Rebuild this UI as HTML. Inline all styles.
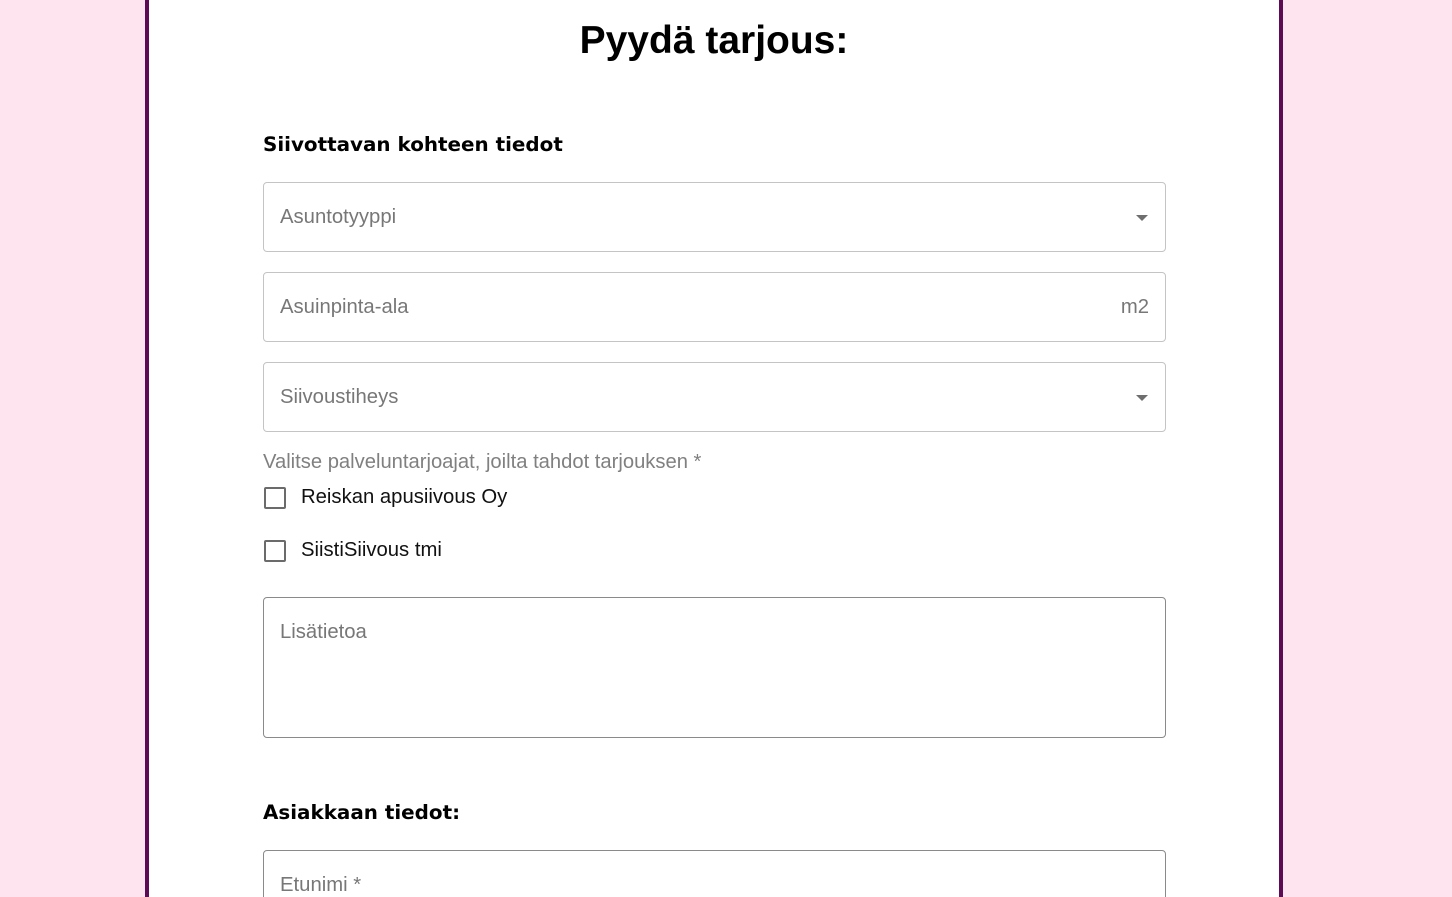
<!DOCTYPE html>
<html><head><meta charset="utf-8"><style>
html,body{margin:0;padding:0;width:1452px;height:897px;overflow:hidden;background:#fde4ef;font-family:"Liberation Sans",Arial,sans-serif;position:relative;}
.card{position:absolute;left:145px;top:0;width:1130px;height:897px;overflow:hidden;background:#fff;border-left:4px solid #5e0b56;border-right:4px solid #5e0b56;}
h1{position:absolute;left:0;width:1130px;top:19px;margin:0;text-align:center;font-size:39px;font-weight:bold;color:#000;}
h2{position:absolute;left:114px;margin:0;font-family:"DejaVu Sans",sans-serif;font-size:19.9px;font-weight:bold;color:#000;}
.f{position:absolute;left:114px;width:901px;height:68px;border:1px solid #c4c4c4;border-radius:4px;box-sizing:content-box;}
.f span{position:absolute;left:16px;top:23px;font-size:20.3px;color:#777;}
.arr{position:absolute;right:17px;top:32px;width:0;height:0;border-left:6px solid transparent;border-right:6px solid transparent;border-top:6px solid #6e6e6e;}
.cb{position:absolute;left:115px;width:18px;height:18px;border:2px solid #6b6b6b;border-radius:2px;}
.lbl{position:absolute;left:152px;font-size:20.3px;color:#111;}
</style></head><body>
<div class="card">
<h1>Pyydä tarjous:</h1>
<h2 style="top:133px">Siivottavan kohteen tiedot</h2>
<div class="f" style="top:182px"><span>Asuntotyyppi</span><div class="arr"></div></div>
<div class="f" style="top:272px"><span>Asuinpinta-ala</span><span style="left:auto;right:16px">m2</span></div>
<div class="f" style="top:362px"><span>Siivoustiheys</span><div class="arr"></div></div>
<div style="position:absolute;left:114px;top:451px;font-size:20.2px;color:#808080">Valitse palveluntarjoajat, joilta tahdot tarjouksen *</div>
<div class="cb" style="top:487px"></div><div class="lbl" style="top:486px">Reiskan apusiivous Oy</div>
<div class="cb" style="top:540px"></div><div class="lbl" style="top:539px">SiistiSiivous tmi</div>
<div class="f" style="top:597px;height:139px;border-color:#8a8a8a"><span style="top:23px">Lisätietoa</span></div>
<h2 style="top:801px">Asiakkaan tiedot:</h2>
<div class="f" style="top:850px;border-color:#8a8a8a"><span style="top:23px">Etunimi *</span></div>
</div>
</body></html>
